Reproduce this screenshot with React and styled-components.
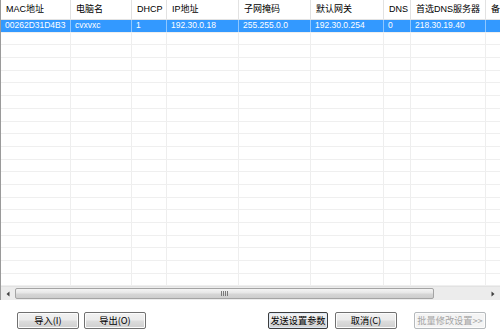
import React from 'react';
import styled, { createGlobalStyle } from 'styled-components';

const GlobalStyle = createGlobalStyle`
  html, body {
    margin: 0;
    padding: 0;
    background: #ffffff;
  }
  body {
    font-family: 'Liberation Sans', 'Noto Sans CJK SC', sans-serif;
  }
`;

const columns = [
  { key: 'mac', title: 'MAC地址', width: 70 },
  { key: 'name', title: '电脑名', width: 61 },
  { key: 'dhcp', title: 'DHCP', width: 35 },
  { key: 'ip', title: 'IP地址', width: 72 },
  { key: 'mask', title: '子网掩码', width: 72 },
  { key: 'gw', title: '默认网关', width: 73 },
  { key: 'dns', title: 'DNS', width: 27 },
  { key: 'dns1', title: '首选DNS服务器', width: 75 },
  { key: 'note', title: '备注', width: 60 }
];

const gridCols = columns.map((c) => `${c.width}px`).join(' ');

const data = [
  {
    mac: '00262D31D4B3',
    name: 'cvxvxc',
    dhcp: '1',
    ip: '192.30.0.18',
    mask: '255.255.0.0',
    gw: '192.30.0.254',
    dns: '0',
    dns1: '218.30.19.40',
    note: ''
  }
];

const EMPTY_ROWS = 21;

const Window = styled.div`
  width: 500px;
  height: 332px;
  overflow: hidden;
  display: flex;
  flex-direction: column;
  background: #ffffff;
`;

const ListView = styled.div`
  height: 300px;
  display: flex;
  flex-direction: column;
  border-left: 1px solid #9a9a9a;
  box-sizing: border-box;
`;

const Body = styled.div`
  flex: 1;
  overflow: hidden;
  display: flex;
  flex-direction: column;
`;

const Row = styled.div`
  display: grid;
  grid-template-columns: ${gridCols};
  flex: none;
  height: ${(p) => (p.$header ? '20px' : '12.7px')};
  box-sizing: border-box;
  border-bottom: 1px solid ${(p) => (p.$header ? '#e3e3e3' : '#efefef')};
  background: ${(p) => (p.$selected ? '#3399ff' : '#ffffff')};
  color: ${(p) => (p.$selected ? '#ffffff' : '#000000')};
`;

const Cell = styled.div`
  font-size: ${(p) => (p.$header ? '9px' : '8.5px')};
  line-height: ${(p) => (p.$header ? '19px' : '11.7px')};
  padding-left: ${(p) => (p.$header ? '5px' : '4px')};
  white-space: nowrap;
  overflow: hidden;
  box-sizing: border-box;
  border-right: 1px solid
    ${(p) => (p.$selected ? 'rgba(255,255,255,0.45)' : p.$header ? '#e2e2e2' : '#eeeeee')};
`;

const ScrollBar = styled.div`
  height: 14px;
  flex: none;
  display: flex;
  align-items: stretch;
  background: #ececec;
  border-top: 1px solid #e2e2e2;
  box-sizing: border-box;
`;

const Arrow = styled.div`
  width: 14px;
  flex: none;
  display: flex;
  align-items: center;
  justify-content: center;
`;

const Track = styled.div`
  flex: 1;
  display: flex;
  padding: 1px 0;
  box-sizing: border-box;
`;

const Thumb = styled.div`
  width: 419px;
  display: flex;
  align-items: center;
  justify-content: center;
  border: 1px solid #a4a4a4;
  border-radius: 2px;
  box-sizing: border-box;
  background: linear-gradient(to bottom, #f4f4f4 0%, #e6e6e6 45%, #d6d6d6 55%, #cdcdcd 100%);
`;

const Grip = styled.div`
  width: 7px;
  height: 5px;
  background: repeating-linear-gradient(
    to right,
    #7a7a7a 0px,
    #7a7a7a 1px,
    transparent 1px,
    transparent 2px
  );
`;

const Footer = styled.div`
  flex: 1;
  display: flex;
  align-items: flex-start;
  padding: 12px 0 0 17px;
  box-sizing: border-box;
`;

const Button = styled.button`
  height: 17px;
  width: ${(p) => p.$w}px;
  margin-left: ${(p) => p.$gap || 0}px;
  padding: 0;
  font-family: 'Noto Sans CJK SC', 'Liberation Sans', sans-serif;
  font-size: 9.2px;
  line-height: 15px;
  color: ${(p) => (p.disabled ? '#a3a3a3' : '#000000')};
  border: 1px solid ${(p) => (p.$default ? '#3c3c3c' : p.disabled ? '#b5b9bc' : '#707070')};
  border-radius: 2px;
  box-sizing: border-box;
  box-shadow: inset 0 0 0 1px ${(p) => (p.$default ? '#dfe9f5' : '#fcfcfc')};
  background: ${(p) =>
    p.disabled
      ? '#f4f4f4'
      : 'linear-gradient(to bottom, #f2f2f2 0%, #ebebeb 48%, #dddddd 52%, #cfcfcf 100%)'};
  white-space: nowrap;
`;

function TriangleLeft() {
  return (
    <svg width="4" height="6" viewBox="0 0 4 6">
      <path d="M3.5 0.5 L0.5 3 L3.5 5.5 Z" fill="#404040" />
    </svg>
  );
}

function TriangleRight() {
  return (
    <svg width="4" height="6" viewBox="0 0 4 6">
      <path d="M0.5 0.5 L3.5 3 L0.5 5.5 Z" fill="#404040" />
    </svg>
  );
}

export default function App() {
  return (
    <>
      <GlobalStyle />
      <Window>
        <ListView>
          <Row $header>
            {columns.map((c) => (
              <Cell key={c.key} $header>
                {c.title}
              </Cell>
            ))}
          </Row>
          <Body>
            {data.map((d) => (
              <Row key={d.mac} $selected>
                {columns.map((c) => (
                  <Cell key={c.key} $selected>
                    {d[c.key]}
                  </Cell>
                ))}
              </Row>
            ))}
            {Array.from({ length: EMPTY_ROWS }).map((_, i) => (
              <Row key={i}>
                {columns.map((c) => (
                  <Cell key={c.key} />
                ))}
              </Row>
            ))}
          </Body>
          <ScrollBar>
            <Arrow>
              <TriangleLeft />
            </Arrow>
            <Track>
              <Thumb>
                <Grip />
              </Thumb>
            </Track>
            <Arrow>
              <TriangleRight />
            </Arrow>
          </ScrollBar>
        </ListView>
        <Footer>
          <Button $w={62}>导入(I)</Button>
          <Button $w={62} $gap={5}>导出(O)</Button>
          <Button $w={60} $gap={122} $default>发送设置参数</Button>
          <Button $w={62} $gap={7}>取消(C)</Button>
          <Button $w={72} $gap={17} disabled>批量修改设置&gt;&gt;</Button>
        </Footer>
      </Window>
    </>
  );
}
